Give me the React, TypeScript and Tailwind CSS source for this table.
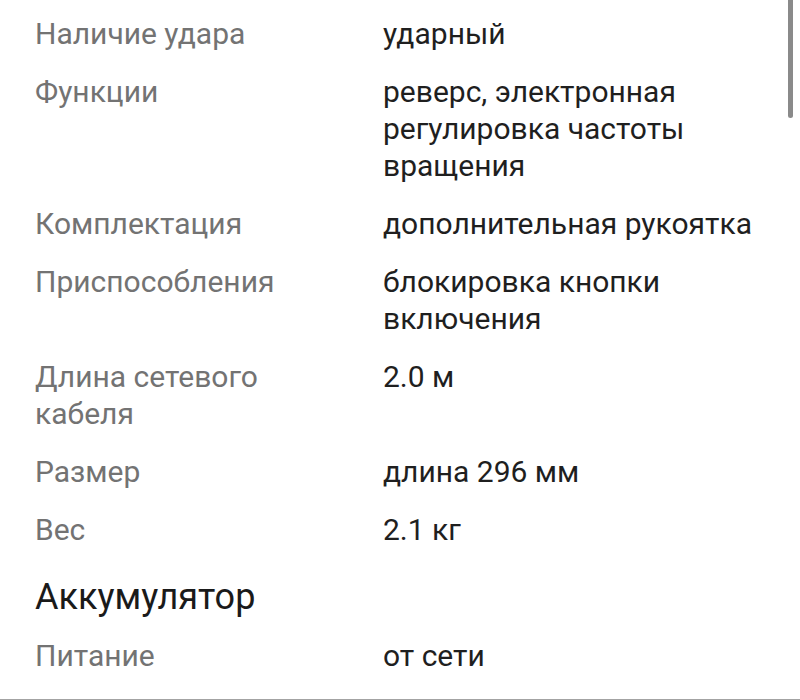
import React from 'react'

type Spec = { label: string; value: string }

const mainSpecs: Spec[] = [
  { label: 'Наличие удара', value: 'ударный' },
  { label: 'Функции', value: 'реверс, электронная регулировка частоты вращения' },
  { label: 'Комплектация', value: 'дополнительная рукоятка' },
  { label: 'Приспособления', value: 'блокировка кнопки включения' },
  { label: 'Длина сетевого кабеля', value: '2.0 м' },
  { label: 'Размер', value: 'длина 296 мм' },
  { label: 'Вес', value: '2.1 кг' },
]

const batterySpecs: Spec[] = [{ label: 'Питание', value: 'от сети' }]

function SpecRow({ spec }: { spec: Spec }) {
  return (
    <div className="grid grid-cols-[348px_1fr] pt-[11px] pb-[10px] text-[30px] leading-[37px]">
      <div className="pr-[32px] text-[#737373]">{spec.label}</div>
      <div className="pr-[20px] text-[#1f1f1f]">{spec.value}</div>
    </div>
  )
}

export default function App() {
  return (
    <div
      className="relative h-[700px] w-[800px] overflow-hidden bg-white"
      style={{ fontFamily: 'Roboto, "Noto Sans", sans-serif' }}
    >
      <div className="flex flex-col pl-[35px] pt-[4px]">
        {mainSpecs.map((s) => (
          <SpecRow key={s.label} spec={s} />
        ))}
        <h3 className="pt-[18px] pb-[8px] text-[36px] leading-[42px] font-normal text-[#1a1a1a]">
          Аккумулятор
        </h3>
        {batterySpecs.map((s) => (
          <SpecRow key={s.label} spec={s} />
        ))}
      </div>
      <div className="absolute bottom-0 left-0 right-0 h-px bg-[#a3a3a3]" />
      <div className="absolute right-[7px] top-0 h-[118px] w-[5px] rounded-b-full bg-[#8a8a8a]" />
    </div>
  )
}
